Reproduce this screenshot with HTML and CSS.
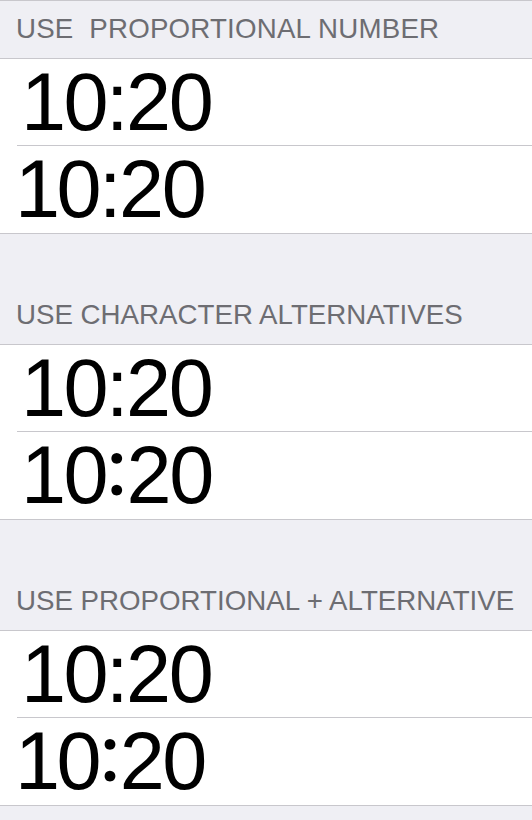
FILE: index.html
```html
<!DOCTYPE html>
<html>
<head>
<meta charset="utf-8">
<link rel="stylesheet" href="styles.css">
</head>
<body>
<div class="page">
  <div class="header first"><span class="label wide">USE&nbsp; PROPORTIONAL NUMBER</span></div>
  <div class="group">
    <div class="row"><span class="time">10:20</span></div>
    <div class="row last"><span class="time"><span class="p1">1</span>0:20</span></div>
  </div>
  <div class="header"><span class="label">USE CHARACTER ALTERNATIVES</span></div>
  <div class="group">
    <div class="row"><span class="time">10:20</span></div>
    <div class="row last"><span class="time">10<span class="alt">:</span>20</span></div>
  </div>
  <div class="header"><span class="label">USE PROPORTIONAL + ALTERNATIVE</span></div>
  <div class="group">
    <div class="row"><span class="time">10:20</span></div>
    <div class="row last"><span class="time"><span class="p1">1</span>0<span class="alt">:</span>20</span></div>
  </div>
</div>
</body>
</html>
```

FILE: styles.css
```css
html, body {
  margin: 0;
  padding: 0;
  background: #efeff4;
}

.page {
  border-top: 1px solid #c8c7cc;
  font-family: "Liberation Sans", Arial, sans-serif;
}

.header {
  display: flex;
  align-items: flex-end;
  padding: 0 0 13px 16px;
  border-bottom: 1px solid #c8c7cc;
  height: 97px;
}

.header.first {
  height: 44px;
}

.label {
  font-size: 27.7px;
  line-height: 32px;
  color: #6d6d72;
  white-space: pre;
}

.label.wide {
  letter-spacing: 0.2px;
}

.group {
  background: #ffffff;
  border-bottom: 1px solid #c8c7cc;
}

.row {
  margin-left: 17px;
  height: 86px;
  border-bottom: 1px solid #c8c7cc;
  display: flex;
  align-items: flex-start;
}

.row.last {
  border-bottom: none;
  height: 87px;
}

.time {
  margin-left: 4px;
  font-size: 81px;
  line-height: 86px;
  letter-spacing: -2.5px;
  color: #000000;
  white-space: pre;
}

.p1 {
  margin-left: -6px;
  margin-right: -1px;
}

.alt {
  font-family: Lato, "Liberation Sans", sans-serif;
  font-size: 86px;
  line-height: 0;
  vertical-align: 8px;
  letter-spacing: -1px;
}
```
